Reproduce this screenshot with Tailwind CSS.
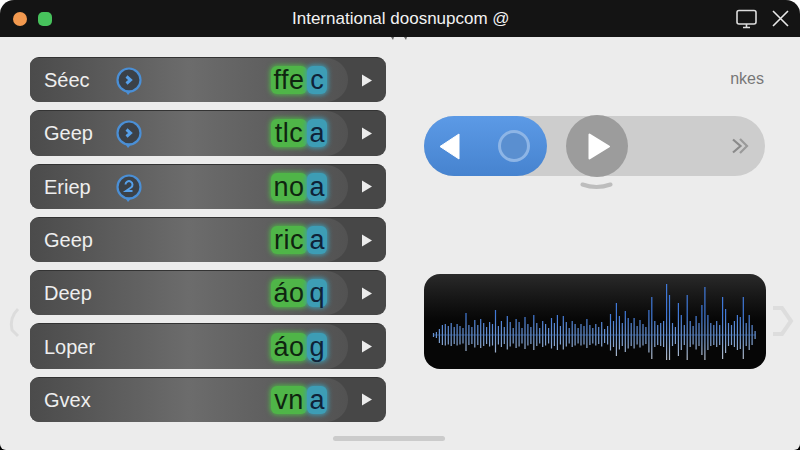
<!DOCTYPE html>
<html lang="en">

<head>
    <meta charset="UTF-8">
    <meta name="viewport" content="width=device-width, initial-scale=1.0">
    <title>International doosnupcom</title>
    <script src="https://cdn.jsdelivr.net/npm/@tailwindcss/browser@4"></script>
</head>

<body class="bg-[linear-gradient(#fff_50%,#000_50%)] overflow-hidden font-['Liberation_Sans',Arial,sans-serif]">
    <div class="relative w-[800px] h-[450px] bg-[#ececec] rounded-b-[6px] rounded-t-[14px] overflow-hidden">

        <!-- Title bar -->
        <div class="relative flex items-center h-[37px] bg-[#141414] text-white">
            <span class="ml-[13px] w-[14px] h-[14px] rounded-full bg-[#f2994f]"></span>
            <span class="ml-[11px] w-[14px] h-[14px] rounded-[5px] bg-[#47c25c]"></span>
            <div class="ml-[240px] w-[216px] text-[17px] leading-none whitespace-nowrap text-[#f2f2f2]">International doosnupcom @</div>
            <svg class="ml-[228px] w-[21px] h-[20px]" viewBox="0 0 21 20" fill="none" stroke="#dcdcdc" stroke-width="1.6">
                <rect x="1" y="1.500" width="19" height="13.500" rx="2" />
                <path d="M10.500 15v3M7 18.500h7" />
            </svg>
            <svg class="ml-[15px] w-[17px] h-[17px]" viewBox="0 0 17 17" fill="none" stroke="#e8e8e8" stroke-width="1.6">
                <path d="M1 1l15 15M16 1L1 16" />
            </svg>
            <!-- small notch marks under the bar -->
            <svg class="absolute left-[390px] top-[37px] w-[18px] h-[3px]" viewBox="0 0 18 3"><path d="M1 0h3l-1 3zM14 0h3l-1 3z" fill="#666" /></svg>
        </div>

        <div class="flex">
            <!-- Track list -->
            <div class="ml-[30px] mt-[20px] w-[356px] flex flex-col gap-[8px]">
                <div class="flex items-center h-[45.3px] rounded-[9px] bg-[#474747] overflow-hidden border-t border-[#333]">
                    <div class="flex items-center flex-1 h-full pl-[14px] rounded-r-[22px] bg-gradient-to-r from-[#4b4b4b] via-[#6c6c6c] to-[#525252]">
                        <span class="w-[71px] text-[20px] text-[#eeeeee]">Séec</span>
                        <svg class="w-[28px] h-[30px]" viewBox="0 0 28 30" fill="none">
                            <circle cx="14" cy="15" r="11.500" fill="#3b4148" stroke="#4a8fd6" stroke-width="2.200" />
                            <path d="M10 25.500l7 0-4 4.500z" fill="#4a8fd6" />
                            <path d="M11.500 11.500l4 3.500-4 3.500" stroke="#56a0ea" stroke-width="3" />
                        </svg>
                        <div class="ml-[128px] flex items-center text-[27px] leading-[28px] text-center">
                            <span class="w-[36px] rounded-[6px] bg-[#4fb548] text-[#0f2410] shadow-[0_0_5px_1px_#4fb548] tracking-[0.5px]">ffe</span><span class="w-[20px] rounded-[6px] bg-[#3d9db5] text-[#0f2238] shadow-[0_0_5px_1px_#3d9db5]">c</span>
                        </div>
                    </div>
                    <svg class="mx-[13px] w-[12px] h-[13px]" viewBox="0 0 12 13"><path d="M1 0.500l10 6-10 6z" fill="#ececec" /></svg>
                </div>

                <div class="flex items-center h-[45.3px] rounded-[9px] bg-[#474747] overflow-hidden border-t border-[#333]">
                    <div class="flex items-center flex-1 h-full pl-[14px] rounded-r-[22px] bg-gradient-to-r from-[#4b4b4b] via-[#6c6c6c] to-[#525252]">
                        <span class="w-[71px] text-[20px] text-[#eeeeee]">Geep</span>
                        <svg class="w-[28px] h-[30px]" viewBox="0 0 28 30" fill="none">
                            <circle cx="14" cy="15" r="11.500" fill="#3b4148" stroke="#4a8fd6" stroke-width="2.200" />
                            <path d="M10 25.500l7 0-4 4.500z" fill="#4a8fd6" />
                            <path d="M11.500 11.500l4 3.500-4 3.500" stroke="#56a0ea" stroke-width="3" />
                        </svg>
                        <div class="ml-[128px] flex items-center text-[27px] leading-[28px] text-center">
                            <span class="w-[36px] rounded-[6px] bg-[#4fb548] text-[#0f2410] shadow-[0_0_5px_1px_#4fb548] tracking-[0.5px]">tlc</span><span class="w-[20px] rounded-[6px] bg-[#3d9db5] text-[#0f2238] shadow-[0_0_5px_1px_#3d9db5]">a</span>
                        </div>
                    </div>
                    <svg class="mx-[13px] w-[12px] h-[13px]" viewBox="0 0 12 13"><path d="M1 0.500l10 6-10 6z" fill="#ececec" /></svg>
                </div>

                <div class="flex items-center h-[45.3px] rounded-[9px] bg-[#474747] overflow-hidden border-t border-[#333]">
                    <div class="flex items-center flex-1 h-full pl-[14px] rounded-r-[22px] bg-gradient-to-r from-[#4b4b4b] via-[#6c6c6c] to-[#525252]">
                        <span class="w-[71px] text-[20px] text-[#eeeeee]">Eriep</span>
                        <svg class="w-[28px] h-[30px]" viewBox="0 0 28 30" fill="none">
                            <circle cx="14" cy="15" r="11.500" fill="#3b4148" stroke="#4a8fd6" stroke-width="2.200" />
                            <path d="M10 25.500l7 0-4 4.500z" fill="#4a8fd6" />
                            <path d="M10.500 12.500a3.500 3.500 0 1 1 5.500 3l-5 3.500h6.500" stroke="#56a0ea" stroke-width="2" />
                        </svg>
                        <div class="ml-[128px] flex items-center text-[27px] leading-[28px] text-center">
                            <span class="w-[36px] rounded-[6px] bg-[#4fb548] text-[#0f2410] shadow-[0_0_5px_1px_#4fb548] tracking-[0.5px]">no</span><span class="w-[20px] rounded-[6px] bg-[#3d9db5] text-[#0f2238] shadow-[0_0_5px_1px_#3d9db5]">a</span>
                        </div>
                    </div>
                    <svg class="mx-[13px] w-[12px] h-[13px]" viewBox="0 0 12 13"><path d="M1 0.500l10 6-10 6z" fill="#ececec" /></svg>
                </div>

                <div class="flex items-center h-[45.3px] rounded-[9px] bg-[#474747] overflow-hidden border-t border-[#333]">
                    <div class="flex items-center flex-1 h-full pl-[14px] rounded-r-[22px] bg-gradient-to-r from-[#4b4b4b] via-[#6c6c6c] to-[#525252]">
                        <span class="w-[227px] text-[20px] text-[#eeeeee]">Geep</span>
                        <div class="flex items-center text-[27px] leading-[28px] text-center">
                            <span class="w-[36px] rounded-[6px] bg-[#4fb548] text-[#0f2410] shadow-[0_0_5px_1px_#4fb548] tracking-[0.5px]">ric</span><span class="w-[20px] rounded-[6px] bg-[#3d9db5] text-[#0f2238] shadow-[0_0_5px_1px_#3d9db5]">a</span>
                        </div>
                    </div>
                    <svg class="mx-[13px] w-[12px] h-[13px]" viewBox="0 0 12 13"><path d="M1 0.500l10 6-10 6z" fill="#ececec" /></svg>
                </div>

                <div class="flex items-center h-[45.3px] rounded-[9px] bg-[#474747] overflow-hidden border-t border-[#333]">
                    <div class="flex items-center flex-1 h-full pl-[14px] rounded-r-[22px] bg-gradient-to-r from-[#4b4b4b] via-[#6c6c6c] to-[#525252]">
                        <span class="w-[227px] text-[20px] text-[#eeeeee]">Deep</span>
                        <div class="flex items-center text-[27px] leading-[28px] text-center">
                            <span class="w-[36px] rounded-[6px] bg-[#4fb548] text-[#0f2410] shadow-[0_0_5px_1px_#4fb548] tracking-[0.5px]">áo</span><span class="w-[20px] rounded-[6px] bg-[#3d9db5] text-[#0f2238] shadow-[0_0_5px_1px_#3d9db5]">q</span>
                        </div>
                    </div>
                    <svg class="mx-[13px] w-[12px] h-[13px]" viewBox="0 0 12 13"><path d="M1 0.500l10 6-10 6z" fill="#ececec" /></svg>
                </div>

                <div class="flex items-center h-[45.3px] rounded-[9px] bg-[#474747] overflow-hidden border-t border-[#333]">
                    <div class="flex items-center flex-1 h-full pl-[14px] rounded-r-[22px] bg-gradient-to-r from-[#4b4b4b] via-[#6c6c6c] to-[#525252]">
                        <span class="w-[227px] text-[20px] text-[#eeeeee]">Loper</span>
                        <div class="flex items-center text-[27px] leading-[28px] text-center">
                            <span class="w-[36px] rounded-[6px] bg-[#4fb548] text-[#0f2410] shadow-[0_0_5px_1px_#4fb548] tracking-[0.5px]">áo</span><span class="w-[20px] rounded-[6px] bg-[#3d9db5] text-[#0f2238] shadow-[0_0_5px_1px_#3d9db5]">g</span>
                        </div>
                    </div>
                    <svg class="mx-[13px] w-[12px] h-[13px]" viewBox="0 0 12 13"><path d="M1 0.500l10 6-10 6z" fill="#ececec" /></svg>
                </div>

                <div class="flex items-center h-[45.3px] rounded-[9px] bg-[#474747] overflow-hidden border-t border-[#333]">
                    <div class="flex items-center flex-1 h-full pl-[14px] rounded-r-[22px] bg-gradient-to-r from-[#4b4b4b] via-[#6c6c6c] to-[#525252]">
                        <span class="w-[227px] text-[20px] text-[#eeeeee]">Gvex</span>
                        <div class="flex items-center text-[27px] leading-[28px] text-center">
                            <span class="w-[36px] rounded-[6px] bg-[#4fb548] text-[#0f2410] shadow-[0_0_5px_1px_#4fb548] tracking-[0.5px]">vn</span><span class="w-[20px] rounded-[6px] bg-[#3d9db5] text-[#0f2238] shadow-[0_0_5px_1px_#3d9db5]">a</span>
                        </div>
                    </div>
                    <svg class="mx-[13px] w-[12px] h-[13px]" viewBox="0 0 12 13"><path d="M1 0.500l10 6-10 6z" fill="#ececec" /></svg>
                </div>
            </div>

            <!-- Player column -->
            <div class="ml-[38px] w-[342px] flex flex-col">
                <div class="mt-[33px] pr-[2px] text-right text-[16px] leading-[18px] text-[#777]">nkes</div>

                <div class="relative mt-[28px] flex items-center h-[60px] w-[341px] rounded-full bg-[#cdcdcd]">
                    <div class="flex items-center w-[123px] h-full rounded-full bg-gradient-to-b from-[#5c9ae6] to-[#4683cf]">
                        <svg class="ml-[15px] w-[21px] h-[27px]" viewBox="0 0 21 27"><path d="M20 1v25L1 13.500z" fill="#fff" stroke="#fff" stroke-linejoin="round" /></svg>
                        <span class="ml-[38px] w-[32px] h-[32px] rounded-full border-[3px] border-[#8db5e6] bg-[#5a8fd0]"></span>
                    </div>
                    <div class="ml-[19px] flex items-center justify-center w-[62px] h-[62px] rounded-full bg-[#9c9c9c]">
                        <svg class="ml-[3px] w-[22px] h-[27px]" viewBox="0 0 22 27"><path d="M1.500 1.500v24L21 13.500z" fill="#fff" stroke="#fff" stroke-width="2" stroke-linejoin="round" /></svg>
                    </div>
                    <svg class="ml-[103px] w-[19px] h-[16px]" viewBox="0 0 19 16" fill="none" stroke-width="2.200">
                        <path d="M9 1l7 7-7 7" stroke="#9a9a9a" />
                        <path d="M2 1.500l7.500 6.500L2 14.500" stroke="#8a8a8a" />
                    </svg>
                    <svg class="absolute left-[156px] top-[66px] w-[33px] h-[10px]" viewBox="0 0 33 10" fill="none">
                        <path d="M2.500 2.500q14 5 28 0" stroke="#bdbdbd" stroke-width="4" stroke-linecap="round" />
                    </svg>
                </div>

                <!-- Waveform -->
                <div class="mt-[98px] w-[342px] h-[95px] rounded-[16px] bg-gradient-to-b from-[#2a2a2a] via-[#060606] to-[#060606]">
                    <svg id="wave" class="w-full h-full" viewBox="0 0 342 95" fill="none"></svg>
                </div>
            </div>
        </div>

        <!-- scroll handle -->
        <div class="absolute left-[333px] top-[436px] w-[112px] h-[5px] rounded-full bg-[#cbcbcb]"></div>

        <!-- faint page arrows -->
        <svg class="absolute left-[5px] top-[306px] w-[16px] h-[32px]" viewBox="0 0 16 32" fill="none">
            <path d="M13 3Q4 12 7 24l6 6" stroke="#dcdcdc" stroke-width="3" />
        </svg>
        <svg class="absolute left-[771px] top-[306px] w-[23px] h-[30px]" viewBox="0 0 23 30" fill="none">
            <path d="M2 2h9l9 13-9 13H2" stroke="#dddddd" stroke-width="4" />
        </svg>
    </div>

    <script>
        // height above the centre line of every bar, left to right
        var bars = [2, 3, 6, 10, 11, 9, 12, 8, 11, 9, 7, 22, 10, 8, 15, 10, 16, 12, 8, 13, 11, 25, 9, 14, 8, 19, 13, 7, 16, 13, 7, 18, 11, 8, 20, 12, 7, 14, 11, 7, 17, 12, 20, 9, 19, 13, 7, 14, 11, 7, 11, 9, 16, 10, 7, 11, 8, 13, 6, 9, 21, 14, 32, 19, 12, 24, 17, 12, 17, 9, 15, 11, 8, 25, 38, 14, 10, 12, 14, 51, 40, 12, 8, 32, 20, 10, 40, 14, 9, 19, 12, 30, 48, 20, 12, 10, 14, 10, 38, 26, 12, 10, 14, 20, 18, 38, 12, 20, 10, 4]
        var wave = document.getElementById("wave")
        var d = ""
        bars.forEach(function (h, i) {
            var x = 9.5 + i * 2.95
            var down = Math.min(h * 0.5 + 5, 25)
            if (h < 5) down = h
            d += "M" + x.toFixed(1) + " " + (61 - h) + "V" + (61 + down).toFixed(1)
        })
        wave.innerHTML = '<defs><linearGradient id="wg" gradientUnits="userSpaceOnUse" x1="0" y1="10" x2="0" y2="86"><stop offset="0.4" stop-color="#3f78d8"/><stop offset="0.7" stop-color="#6f97d0"/><stop offset="1" stop-color="#b4bcc8"/></linearGradient></defs><path d="' + d + '" stroke="url(#wg)" stroke-width="1.2"/><path d="M9 61H332" stroke="#4a7fd0" stroke-width="1" opacity="0.6"/>'
    </script>
</body>

</html>
